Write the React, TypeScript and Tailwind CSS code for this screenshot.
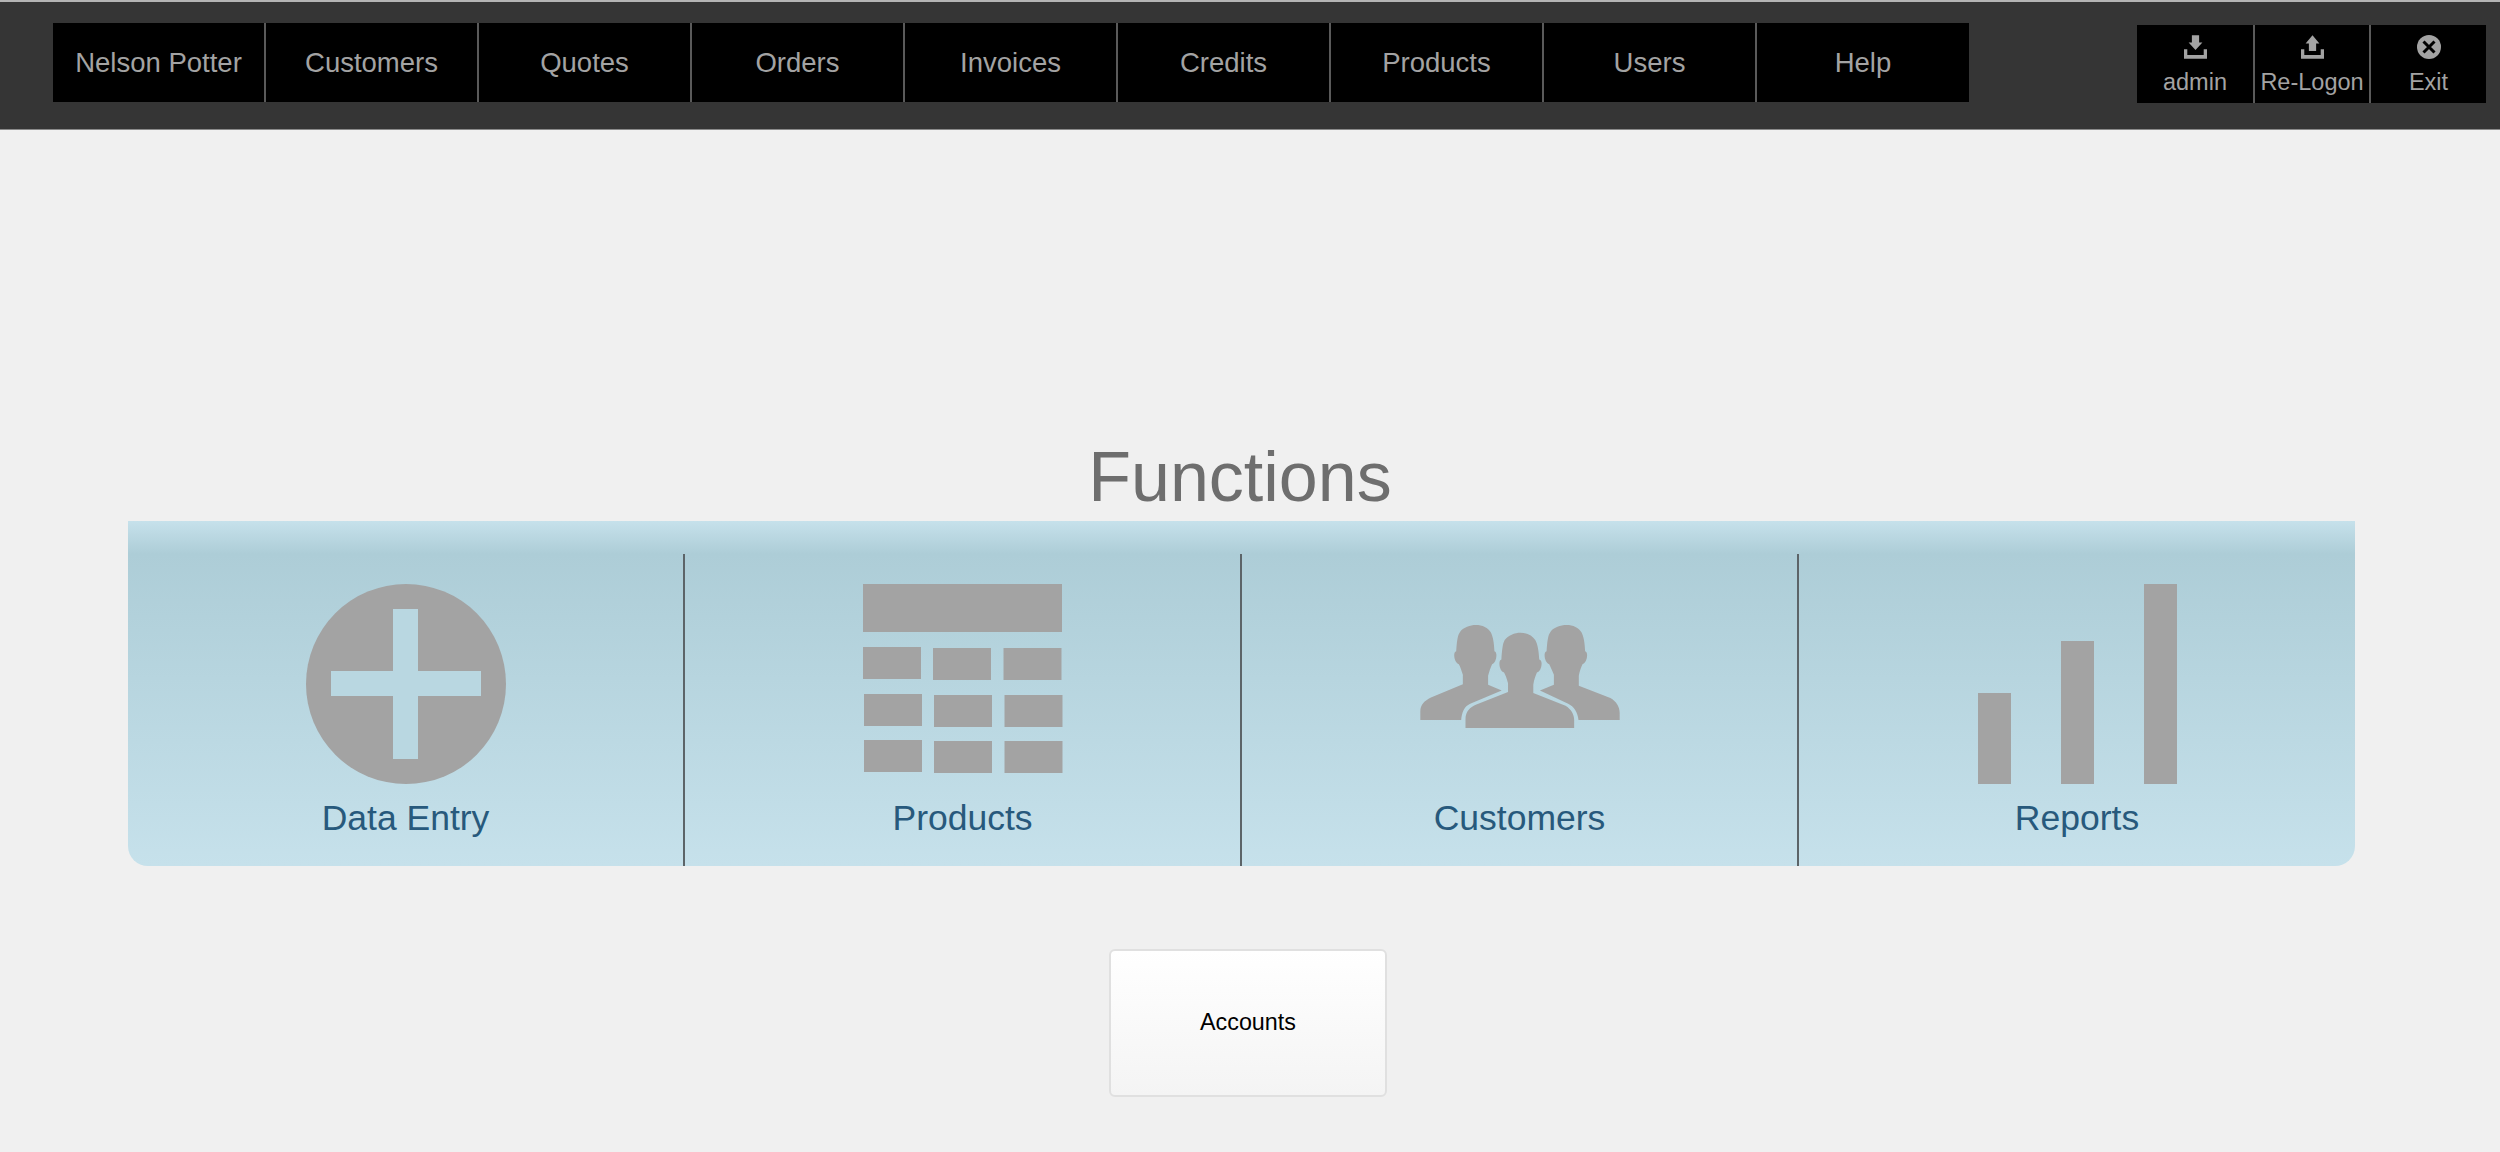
import React from 'react'

const font = { fontFamily: '"Liberation Sans", Arial, sans-serif' }

const menuItems = ['Nelson Potter', 'Customers', 'Quotes', 'Orders', 'Invoices', 'Credits', 'Products', 'Users', 'Help']

const Tray = () => <path d="M0 43h10v17h50V43h10v29H0z" />

const DownloadIcon = () => (
  <svg viewBox="0 0 70 72" className="h-6 w-[23px] fill-[#a3a3a3]">
    <path d="M24 0h22v22h10L35 45 14 22h10z" />
    <Tray />
  </svg>
)

const UploadIcon = () => (
  <svg viewBox="0 0 70 72" className="h-6 w-[23px] fill-[#a3a3a3]">
    <path d="M35 0l21 25H46v23H24V25H14z" />
    <Tray />
  </svg>
)

const ExitIcon = () => (
  <svg viewBox="0 0 24 24" className="h-6 w-6">
    <circle cx="12" cy="12" r="12" fill="#a3a3a3" />
    <path d="M6.500 6.500l11 11M17.500 6.500l-11 11" stroke="#000" strokeWidth="3" fill="none" />
  </svg>
)

const PlusIcon = () => (
  <svg viewBox="0 0 200 200" className="h-[200px] w-[200px]">
    <circle cx="100" cy="100" r="100" fill="#a3a3a3" />
    <path d="M87 25h25v62h63v25h-63v63H87v-63H25V87h62z" fill="#b9d7e1" />
  </svg>
)

const TableIcon = () => (
  <svg viewBox="0 0 200 189" className="h-[189px] w-[200px] fill-[#a3a3a3]">
    <rect x="0" y="0" width="199" height="48" />
    <rect x="0" y="63" width="58" height="32" />
    <rect x="70" y="64" width="58" height="32" />
    <rect x="140.500" y="64" width="58" height="32" />
    <rect x="1" y="110" width="58" height="32" />
    <rect x="71" y="111" width="58" height="32" />
    <rect x="141.500" y="111" width="58" height="32" />
    <rect x="1" y="156" width="58" height="32" />
    <rect x="71" y="157" width="58" height="32" />
    <rect x="141.500" y="157" width="58" height="32" />
  </svg>
)

const PeopleIcon = () => (
  <svg viewBox="118 75 600 310" className="h-[103px] w-[200px] fill-[#a3a3a3]">
    <path d="M118 361V335C118 315 130 303 150 293L246 253V225C242 212 238 200 234 193C226 190 220 178 220 165C220 160 222 155 226 154C228 125 230 105 238 95C248 82 268 75 285 75C305 75 322 83 330 97C337 110 340 130 341 154C345 155 347 160 347 165C347 178 342 190 334 193C330 202 325 215 322 228V255L363 272L268 312C250 320 243 338 241 361Z" />
    <path d="M254 385V358C254 335 268 322 285 315L382 277V250C378 235 374 225 370 218C362 215 356 205 356 190C356 185 358 180 362 179C364 150 366 130 372 120C382 106 402 98 420 98C440 98 456 108 464 120C471 132 475 155 476 179C480 180 483 185 483 190C483 205 477 215 469 218C465 227 460 240 458 255V280L555 318C572 328 581 345 581 360V385Z" />
    <path d="M718 361V340C718 322 708 305 690 295L595 258V228C597 215 602 202 606 193C614 190 620 178 620 165C620 160 618 155 614 154C613 130 610 110 603 97C595 83 578 75 558 75C540 75 520 82 510 95C502 105 500 125 498 154C494 155 492 160 492 165C492 178 498 190 506 193C510 202 515 212 520 225V255L478 272L563 312C580 320 592 338 594 361Z" />
  </svg>
)

const BarsIcon = () => (
  <div className="flex h-[200px] items-end gap-[50px]">
    <div className="h-[91px] w-[33px] bg-[#a3a3a3]" />
    <div className="h-[143px] w-[33px] bg-[#a3a3a3]" />
    <div className="h-[200px] w-[33px] bg-[#a3a3a3]" />
  </div>
)

const functions = [
  { label: 'Data Entry', icon: <PlusIcon /> },
  { label: 'Products', icon: <TableIcon /> },
  { label: 'Customers', icon: <div className="mt-[41px]"><PeopleIcon /></div> },
  { label: 'Reports', icon: <BarsIcon /> },
]

const App = () => {
  return (
    <div className="h-[1152px] w-[2500px] overflow-hidden bg-[#f0f0f0]" style={font}>
      <header className="flex h-[130px] items-start justify-between border-t-2 border-b border-t-[#b4b4b4] border-b-[#8a8a8a] bg-[#353535] pt-[21px] pr-[14px] pl-[53px]">
        <nav className="flex h-[79px] bg-black">
          {menuItems.map((item, i) => (
            <div
              key={item}
              className={`flex h-full items-center justify-center text-[27.500px] text-[#a3a3a3] ${i < menuItems.length - 1 ? 'w-[213px] border-r-2 border-[#5a5a5a]' : 'w-[212px]'}`}
            >
              {item}
            </div>
          ))}
        </nav>
        <div className="mt-[2px] flex h-[78px] bg-black">
          <div className="flex h-full w-[118px] flex-col items-center border-r-2 border-[#5a5a5a] pt-[10px] text-[23.500px] leading-[34px] text-[#a3a3a3]">
            <DownloadIcon />
            <span className="mt-[6px]">admin</span>
          </div>
          <div className="flex h-full w-[116px] flex-col items-center border-r-2 border-[#5a5a5a] pt-[10px] text-[23.500px] leading-[34px] text-[#a3a3a3]">
            <UploadIcon />
            <span className="mt-[6px] whitespace-nowrap">Re-Logon</span>
          </div>
          <div className="flex h-full w-[115px] flex-col items-center pt-[10px] text-[23.500px] leading-[34px] text-[#a3a3a3]">
            <ExitIcon />
            <span className="mt-[6px]">Exit</span>
          </div>
        </div>
      </header>

      <main>
        <h1 className="mt-[303px] pr-[20px] text-center text-[70px] leading-[88px] text-[#6e6e6e]">Functions</h1>

        <section className="ml-[128px] grid h-[345px] w-[2227px] grid-cols-[557px_557px_557px_1fr] rounded-b-[20px] bg-[linear-gradient(to_bottom,#c6e1eb_0px,#adcdd7_33px,#c6e1eb_100%)] pt-[33px]">
          {functions.map((fn, i) => (
            <div
              key={fn.label}
              className={`flex flex-col items-center pt-[30px] ${i < 3 ? 'border-r-2 border-[#5c6468]' : ''}`}
            >
              <div className="flex h-[200px] w-[200px] items-start justify-center">{fn.icon}</div>
              <span className="mt-[10px] text-[35.500px] leading-[48px] text-[#27597c]">{fn.label}</span>
            </div>
          ))}
        </section>

        <button className="mt-[82.500px] ml-[1109px] flex h-[148px] w-[278px] items-center justify-center rounded-[6px] border-2 border-[#e0e0e0] bg-gradient-to-b from-white to-[#f4f4f4] text-[23.300px] text-black">
          Accounts
        </button>
      </main>
    </div>
  )
}

export default App
